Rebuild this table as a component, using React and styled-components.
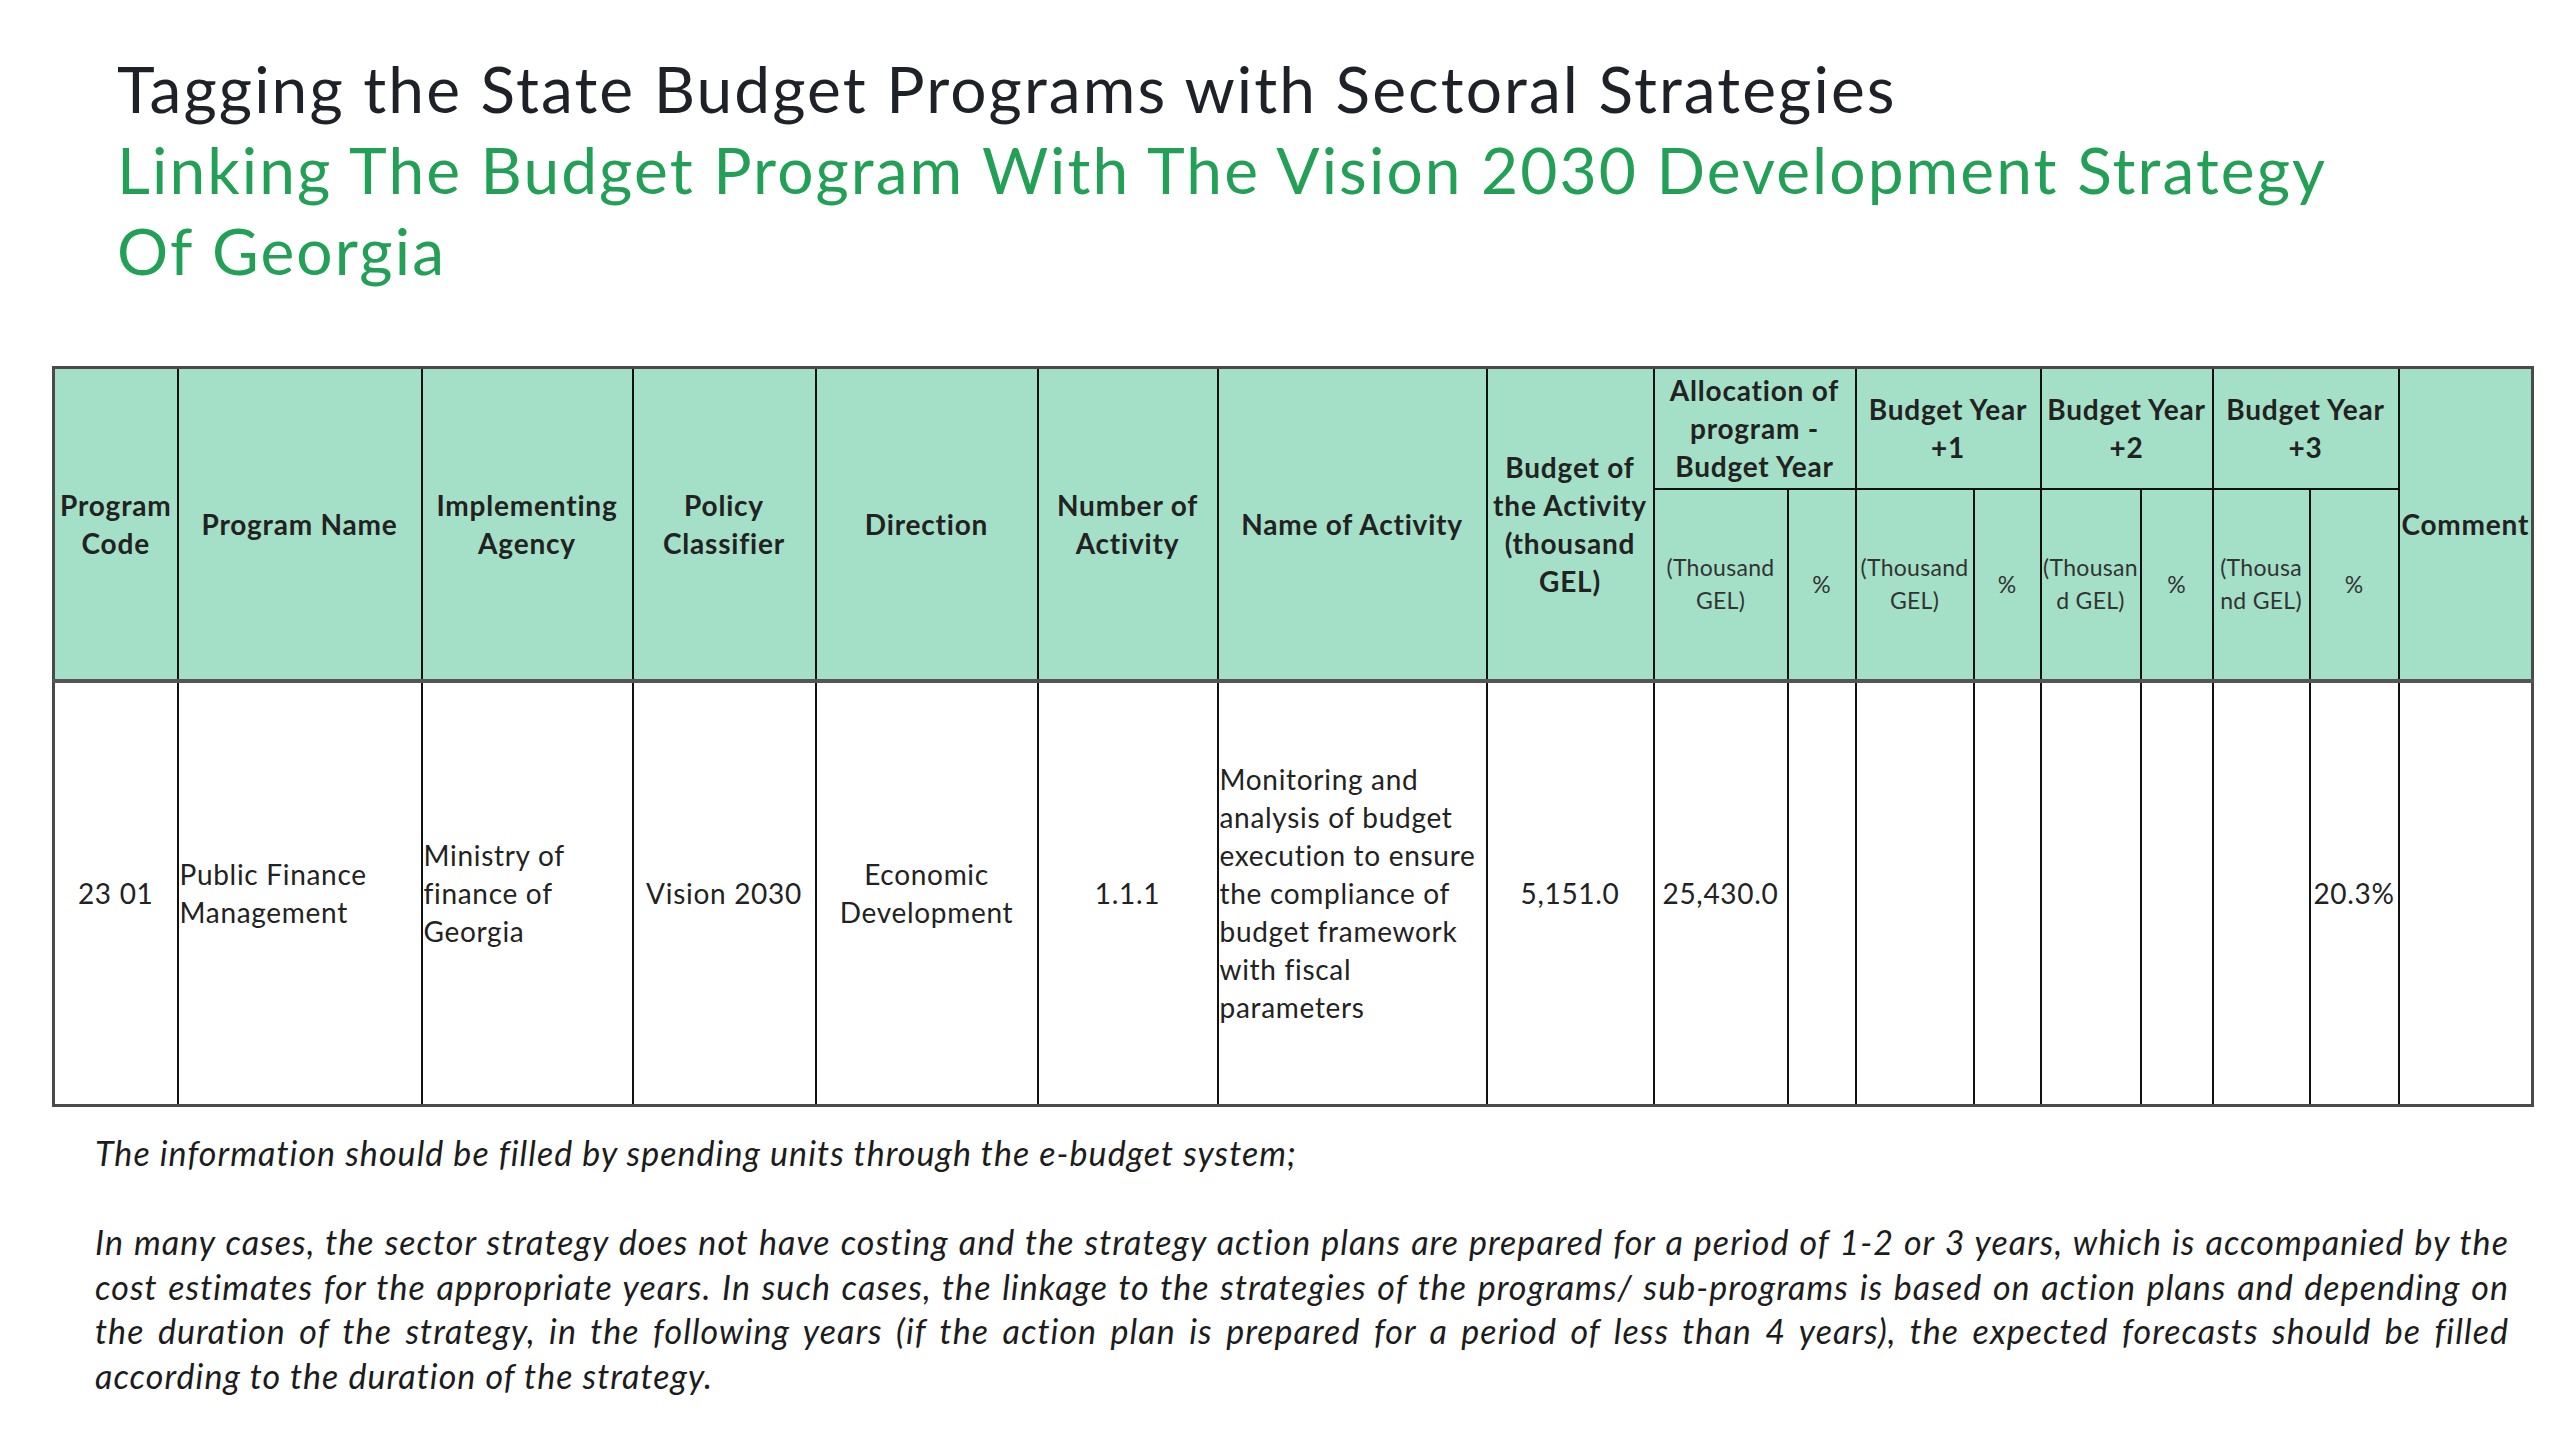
import React from 'react'
import styled, {createGlobalStyle} from 'styled-components'

const GlobalStyle = createGlobalStyle`
  body {
    margin: 0;
    background: #fff;
    font-family: Lato, "Liberation Sans", sans-serif;
  }
`

const Page = styled.div`
  width: 2560px;
  height: 1440px;
  padding-top: 48px;
  box-sizing: border-box;
  overflow: hidden;
`

const Heading = styled.header`
  padding-left: 117px;
  font-size: 64px;
  line-height: 81px;
  letter-spacing: 2.1px;
`

const Title = styled.h1`
  margin: 0;
  font: inherit;
  color: #1e2128;
`

const Subtitle = styled.h2`
  margin: 0;
  font: inherit;
  color: #22a055;
  width: 2260px;
`

const Table = styled.table`
  margin: 75px 0 0 52px;
  width: 2479px;
  table-layout: fixed;
  border-collapse: collapse;
  border: 3px solid #4a4a4a;
  color: #222;
  font-size: 28px;
  line-height: 38px;
`

const HeadRow = styled.tr`
  height: ${(p) => p.$h}px;
  background: #a4e0c7;
`

const Th = styled.th`
  border: 2px solid #111;
  border-top: 3px solid #4a4a4a;
  padding: 0 1px;
  font-weight: 700;
  text-align: center;
  vertical-align: middle;
  letter-spacing: 0.8px;
  white-space: nowrap;
  overflow: hidden;
`

const SubTh = styled.th`
  border: 2px solid #111;
  border-bottom: 4px solid #555;
  padding: 0;
  font-weight: 400;
  font-size: 23px;
  line-height: 33px;
  color: #333;
  text-align: center;
  vertical-align: middle;
  letter-spacing: 0.3px;
  overflow: hidden;
  white-space: nowrap;
`

const SpanTh = styled(Th)`
  border-bottom: 4px solid #555;
`

const BodyRow = styled.tr`
  height: 425px;
`

const Td = styled.td`
  border: 2px solid #111;
  padding: 0 1px;
  text-align: ${(p) => (p.$left ? 'left' : 'center')};
  vertical-align: middle;
  letter-spacing: 0.7px;
  white-space: nowrap;
  overflow: hidden;
`

const Notes = styled.div`
  margin: 24px 0 0 95px;
  width: 2414px;
  font-size: 34px;
  line-height: 44.6px;
  font-style: italic;
  color: #1c1c1c;
  letter-spacing: 1.05px;
`

const Line = styled.div`
  text-align: justify;
  text-align-last: ${(p) => (p.$last ? 'left' : 'justify')};
  white-space: nowrap;
`

const Gap = styled.div`
  height: 44.6px;
`

const widths = [124, 244, 211, 183, 222, 180, 269, 167, 134, 68, 118, 67, 100, 72, 97, 89, 134]

const Lines = ({children}) =>
  children.split('\n').map((l, i) => (
    <React.Fragment key={i}>
      {i > 0 && <br />}
      {l}
    </React.Fragment>
  ))

const paragraph = [
  'In many cases, the sector strategy does not have costing and the strategy action plans are prepared for a period of 1-2 or 3 years, which is accompanied by the',
  'cost estimates for the appropriate years. In such cases, the linkage to the strategies of the programs/ sub-programs is based on action plans and depending on',
  'the duration of the strategy, in the following years (if the action plan is prepared for a period of less than 4 years), the expected forecasts should be filled',
  'according to the duration of the strategy.',
]

export default function App() {
  return (
    <Page>
      <GlobalStyle />
      <Heading>
        <Title>Tagging the State Budget Programs with Sectoral Strategies</Title>
        <Subtitle>
          Linking The Budget Program With The Vision 2030 Development Strategy Of Georgia
        </Subtitle>
      </Heading>

      <Table>
        <colgroup>
          {widths.map((w, i) => (
            <col key={i} style={{width: w}} />
          ))}
        </colgroup>
        <thead>
          <HeadRow $h={121}>
            <SpanTh rowSpan={2}><Lines>{'Program\nCode'}</Lines></SpanTh>
            <SpanTh rowSpan={2}>Program Name</SpanTh>
            <SpanTh rowSpan={2}><Lines>{'Implementing\nAgency'}</Lines></SpanTh>
            <SpanTh rowSpan={2}><Lines>{'Policy\nClassifier'}</Lines></SpanTh>
            <SpanTh rowSpan={2}>Direction</SpanTh>
            <SpanTh rowSpan={2}><Lines>{'Number of\nActivity'}</Lines></SpanTh>
            <SpanTh rowSpan={2}>Name of Activity</SpanTh>
            <SpanTh rowSpan={2}><Lines>{'Budget of\nthe Activity\n(thousand\nGEL)'}</Lines></SpanTh>
            <Th colSpan={2}><Lines>{'Allocation of\nprogram -\nBudget Year'}</Lines></Th>
            <Th colSpan={2}><Lines>{'Budget Year\n+1'}</Lines></Th>
            <Th colSpan={2}><Lines>{'Budget Year\n+2'}</Lines></Th>
            <Th colSpan={2}><Lines>{'Budget Year\n+3'}</Lines></Th>
            <SpanTh rowSpan={2}>Comment</SpanTh>
          </HeadRow>
          <HeadRow $h={192}>
            <SubTh><Lines>{'(Thousand\nGEL)'}</Lines></SubTh>
            <SubTh>%</SubTh>
            <SubTh><Lines>{'(Thousand\nGEL)'}</Lines></SubTh>
            <SubTh>%</SubTh>
            <SubTh><Lines>{'(Thousan\nd GEL)'}</Lines></SubTh>
            <SubTh>%</SubTh>
            <SubTh><Lines>{'(Thousa\nnd GEL)'}</Lines></SubTh>
            <SubTh>%</SubTh>
          </HeadRow>
        </thead>
        <tbody>
          <BodyRow>
            <Td>23 01</Td>
            <Td $left><Lines>{'Public Finance\nManagement'}</Lines></Td>
            <Td $left><Lines>{'Ministry of\nfinance of\nGeorgia'}</Lines></Td>
            <Td>Vision 2030</Td>
            <Td><Lines>{'Economic\nDevelopment'}</Lines></Td>
            <Td>1.1.1</Td>
            <Td $left>
              <Lines>
                {'Monitoring and\nanalysis of budget\nexecution to ensure\nthe compliance of\nbudget framework\nwith fiscal\nparameters'}
              </Lines>
            </Td>
            <Td>5,151.0</Td>
            <Td>25,430.0</Td>
            <Td />
            <Td />
            <Td />
            <Td />
            <Td />
            <Td />
            <Td>20.3%</Td>
            <Td />
          </BodyRow>
        </tbody>
      </Table>

      <Notes>
        <Line $last>The information should be filled by spending units through the e-budget system;</Line>
        <Gap />
        {paragraph.map((l, i) => (
          <Line key={i} $last={i === paragraph.length - 1}>
            {l}
          </Line>
        ))}
      </Notes>
    </Page>
  )
}
